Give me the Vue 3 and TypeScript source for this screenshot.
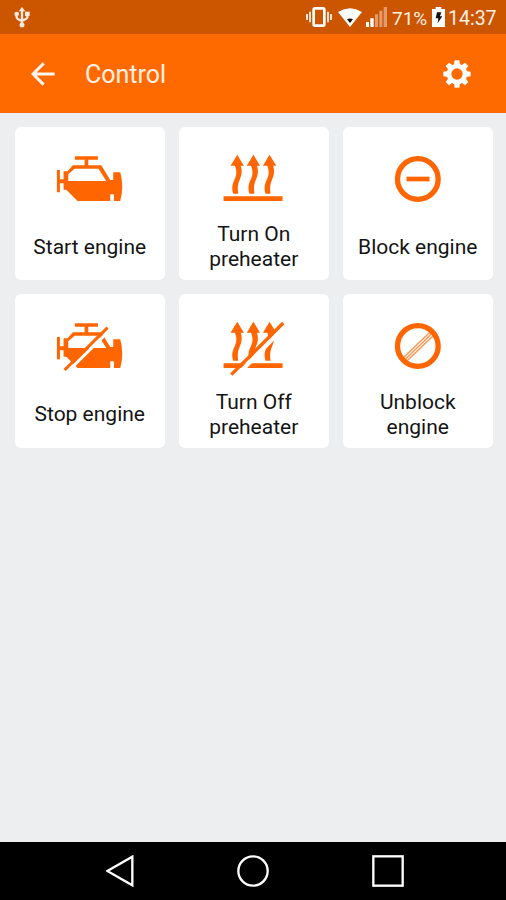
<script setup lang="ts">
type IconName = 'engine' | 'heater' | 'block' | 'unblock'

interface Action {
  label: string
  icon: IconName
  off: boolean
}

const viewBoxes: Record<IconName, string> = {
  engine: '29.25 30 240 192',
  heater: '11.25 30 240 192',
  block: '-7.5 30 240 192',
  unblock: '-7.5 30 240 192',
}

const actions: Action[] = [
  { label: 'Start engine', icon: 'engine', off: false },
  { label: 'Turn On preheater', icon: 'heater', off: false },
  { label: 'Block engine', icon: 'block', off: false },
  { label: 'Stop engine', icon: 'engine', off: true },
  { label: 'Turn Off preheater', icon: 'heater', off: true },
  { label: 'Unblock engine', icon: 'unblock', off: false },
]

const teeth = [0, 45, 90, 135, 180, 225, 270, 315]
const arrows = [0, 48.5, 97]
</script>

<template>
  <div class="screen">
    <header class="status">
      <svg class="usb" viewBox="0 0 48 63" width="16" height="21">
        <g fill="none" stroke="#ffe9df" stroke-width="7">
          <path d="M24 8V54M8 23V31Q8 37 24 42M40 23V31Q40 36 24 41" />
        </g>
        <g fill="#ffe9df">
          <path d="M24 0L34 13H14Z" />
          <circle cx="24" cy="54" r="7.5" />
          <circle cx="8" cy="21" r="7" />
          <rect x="33" y="14" width="14" height="13" />
        </g>
      </svg>
      <div class="tray">
        <svg class="vibrate" viewBox="0 0 78 60" width="26" height="20">
          <rect x="23" y="4" width="32" height="52" rx="4" fill="none" stroke="#fff" stroke-width="8" />
          <path d="M12 14V46M66 14V46M3 21V39M75 21V39" stroke="#fff" stroke-width="5" />
        </svg>
        <svg class="wifi" viewBox="0 0 72 57" width="24" height="19">
          <path d="M0 12Q36 -10 72 12L36 57Z" fill="#fff" />
          <path d="M27 34Q36 29 45 34L36 45Z" fill="#18120e" />
        </svg>
        <svg class="signal" viewBox="0 0 63 60" width="21" height="20">
          <path d="M0 45h9v15H0zM13 34h10v26H13z" fill="#fff" />
          <path d="M27 22h9v38h-9zM40 11h9v49h-9zM53 0h10v60H53z" fill="#e39a6c" />
        </svg>
        <span class="percent">71%</span>
        <svg class="battery" viewBox="0 0 39 60" width="13" height="20">
          <path d="M11 0H28V6H39V60H0V6H11Z" fill="#fff" />
          <path d="M15 16H28L24 28H31L17 49L19 34H11Z" fill="#17110d" />
        </svg>
        <span class="clock">14:37</span>
      </div>
    </header>

    <nav class="appbar">
      <svg class="back" viewBox="0 0 72 72" width="24" height="24">
        <path d="M71 36H6M38 4L6 36L38 68" fill="none" stroke="#fff5ee" stroke-width="9" />
      </svg>
      <h1>Control</h1>
      <svg class="gear" viewBox="-42 -42 84 84" width="28" height="28">
        <circle r="24" fill="none" stroke="#fff" stroke-width="14" />
        <path
          v-for="angle in teeth"
          :key="angle"
          d="M-9 -27L-7 -41H7L9 -27Z"
          fill="#fff"
          :transform="`rotate(${angle})`"
        />
      </svg>
    </nav>

    <main class="grid">
      <button v-for="action in actions" :key="action.label" class="card" type="button">
        <svg class="icon" :viewBox="viewBoxes[action.icon]" width="80" height="64">
          <template v-if="action.icon === 'engine'">
            <path
              fill="currentColor"
              fill-rule="evenodd"
              d="M104 49H173V59H144V76H183L210 120H219V97H240Q252 140 240 183H221V163H210V183H112L78 149H70V130H59V157H50V90H59V118H70V94H82L98 76H133V59H104ZM84 123H198L175 86H103L84 103Z"
            />
            <template v-if="action.off">
              <path d="M86 190L200 78" stroke="#fff" stroke-width="9" />
              <path d="M73 189L202 62" stroke="currentColor" stroke-width="9" />
            </template>
          </template>

          <template v-else-if="action.icon === 'heater'">
            <path d="M40 176H217" stroke="currentColor" stroke-width="14" />
            <g v-for="x in arrows" :key="x" :transform="`translate(${x} 0)`">
              <path d="M81 44L101 77H61Z" fill="currentColor" />
              <path
                d="M72 72L90 72C98 94 94 106 88 120C82 134 82 144 84 161H69C63 142 67 130 74 116C80 102 80 92 72 72Z"
                fill="currentColor"
              />
            </g>
            <template v-if="action.off">
              <path d="M80 205L222 60" stroke="#fff" stroke-width="13" />
              <path d="M63 203L219 48" stroke="currentColor" stroke-width="10" />
            </template>
          </template>

          <template v-else>
            <circle cx="112" cy="117" r="61" fill="none" stroke="currentColor" stroke-width="16" />
            <path v-if="action.icon === 'block'" d="M78 117H147" stroke="currentColor" stroke-width="14" />
            <g v-else stroke="currentColor" stroke-width="4" opacity=".7">
              <path d="M70 151L148 76M75 156L153 81M80 161L158 86" />
            </g>
          </template>
        </svg>
        <span class="caption"><span>{{ action.label }}</span></span>
      </button>
    </main>

    <footer class="navbar">
      <svg viewBox="0 0 84 96" width="28" height="32">
        <path d="M4 48L79 5V91Z" fill="none" stroke="#fff" stroke-width="7" />
      </svg>
      <svg viewBox="0 0 96 96" width="32" height="32">
        <circle cx="48" cy="48" r="44" fill="none" stroke="#fff" stroke-width="7" />
      </svg>
      <svg viewBox="0 0 96 96" width="32" height="32">
        <rect x="4" y="4" width="88" height="88" fill="none" stroke="#fff" stroke-width="7" />
      </svg>
    </footer>
  </div>
</template>

<style>
body {
  margin: 0;
}
</style>

<style scoped>
.screen {
  display: flex;
  flex-direction: column;
  width: 506px;
  height: 900px;
  overflow: hidden;
  background: #eceef0;
  font-family: Roboto, 'Liberation Sans', sans-serif;
}

svg {
  display: block;
  flex: none;
}

.status {
  display: flex;
  justify-content: space-between;
  box-sizing: border-box;
  flex: none;
  height: 34px;
  padding: 7px 10px 0 14px;
  background: #cc5500;
  color: #fff0e8;
}

.tray {
  display: flex;
  align-items: flex-start;
  font-size: 20px;
  line-height: 23px;
}

.vibrate {
  margin-left: 1px;
}

.wifi {
  margin: 1px 0 0 6px;
}

.signal {
  margin-left: 4px;
}

.percent {
  width: 35px;
  margin-left: 5px;
  font-size: 19px;
}

.battery {
  margin-left: 5px;
}

.clock {
  width: 48px;
  margin-left: 3px;
  font-size: 19.5px;
}

.appbar {
  display: flex;
  align-items: center;
  box-sizing: border-box;
  flex: none;
  height: 79px;
  padding: 0 35px 0 31px;
  background: #ff6a00;
}

h1 {
  flex: 1;
  margin: 2px 0 0 30px;
  color: #fff0e5;
  font-size: 25px;
  font-weight: 400;
  line-height: 30px;
}

.grid {
  display: grid;
  grid-template-columns: repeat(3, 150.5px);
  grid-auto-rows: 153.4px;
  gap: 14px 13.5px;
  flex: 1;
  align-content: start;
  padding: 14px 0 0 14.5px;
}

.card {
  display: flex;
  flex-direction: column;
  align-items: center;
  justify-content: flex-start;
  padding: 23px 0 0;
  border: 0;
  border-radius: 6px;
  background: #fff;
  color: #ff6500;
  font-family: inherit;
}

.icon {
  height: 64px;
}

.caption {
  display: flex;
  align-items: center;
  justify-content: center;
  width: 130px;
  height: 67px;
  color: #141414;
  font-size: 21px;
  line-height: 25px;
  text-align: center;
}

.navbar {
  display: flex;
  align-items: center;
  justify-content: space-between;
  box-sizing: border-box;
  flex: none;
  height: 58px;
  padding: 0 102px 0 106px;
  background: #000;
}
</style>
